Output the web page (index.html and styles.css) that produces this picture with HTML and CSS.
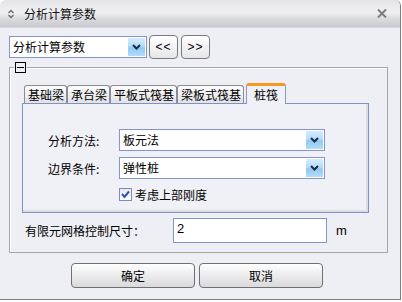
FILE: index.html
```html
<!DOCTYPE html>
<html>
<head>
<meta charset="utf-8">
<link rel="stylesheet" href="styles.css">
</head>
<body>
<div class="win">
  <div class="titlebar">
    <svg class="ticon" width="8" height="10" viewBox="0 0 8 10"><path d="M1.5 4 L4 1.5 L6.5 4 M1.5 6 L4 8.5 L6.5 6" fill="none" stroke="#6a6a6a" stroke-width="1.3"/></svg>
    <span class="title">分析计算参数</span>
    <svg class="close" width="10" height="9" viewBox="0 0 10 9"><path d="M1 0.5 L9 8.5 M9 0.5 L1 8.5" stroke="#7c7c7c" stroke-width="2"/></svg>
  </div>
  <div class="content">
    <div class="toprow">
      <div class="combo main"><span class="val">分析计算参数</span><span class="drop"><svg width="9" height="6" viewBox="0 0 9 6"><path d="M1 1 L4.5 4.5 L8 1" fill="none" stroke="#1e2c44" stroke-width="2"/></svg></span></div>
      <button class="nav">&lt;&lt;</button>
      <button class="nav">&gt;&gt;</button>
    </div>
    <div class="group">
      <span class="collapse"><span class="minus"></span></span>
      <div class="tabs">
        <span class="tab">基础梁</span>
        <span class="tab">承台梁</span>
        <span class="tab">平板式筏基</span>
        <span class="tab">梁板式筏基</span>
        <span class="tab active">桩筏</span>
      </div>
      <div class="panel">
        <div class="frow"><span class="lbl">分析方法:</span><div class="combo wide"><span class="val">板元法</span><span class="drop"><svg width="9" height="6" viewBox="0 0 9 6"><path d="M1 1 L4.5 4.5 L8 1" fill="none" stroke="#1e2c44" stroke-width="2"/></svg></span></div></div>
        <div class="frow"><span class="lbl">边界条件:</span><div class="combo wide"><span class="val">弹性桩</span><span class="drop"><svg width="9" height="6" viewBox="0 0 9 6"><path d="M1 1 L4.5 4.5 L8 1" fill="none" stroke="#1e2c44" stroke-width="2"/></svg></span></div></div>
        <div class="check"><span class="box"><svg width="11" height="11" viewBox="0 0 11 11"><path d="M2 5 L4.5 8 L9 2.5" fill="none" stroke="#3552b0" stroke-width="2"/></svg></span><span>考虑上部刚度</span></div>
      </div>
      <div class="meshrow"><span class="mlbl">有限元网格控制尺寸：</span><div class="input">2</div><span class="unit">m</span></div>
    </div>
    <div class="btns"><button class="btn">确定</button><button class="btn">取消</button></div>
  </div>
</div>
</body>
</html>
```

FILE: styles.css
```css
html, body {
  margin: 0;
  padding: 0;
  background: #ffffff;
}
body {
  font-family: "Noto Sans CJK SC", "Liberation Sans", sans-serif;
  font-size: 12px;
  color: #000;
}
.win {
  width: 400px;
  height: 299px;
  border-right: 1px solid #7e7e80;
  border-bottom: 1px solid #7e7e80;
  background: #eeeff4;
  border-top-left-radius: 6px;
  border-top-right-radius: 6px;
  overflow: hidden;
}
.titlebar {
  height: 28px;
  display: flex;
  align-items: center;
  background: linear-gradient(#e4e4e6 0%, #f0f0f2 45%, #dadbde 70%, #c9cacf 100%);
  border-bottom: 1px solid #d8d9de;
  box-sizing: border-box;
}
.ticon {
  margin-left: 7px;
  margin-right: 9px;
}
.title {
  flex: 1;
  line-height: 14px;
  font-size: 12px;
  color: #111;
}
.close {
  margin-right: 13px;
}
.content {
  padding: 7px 0 0 9px;
}
.toprow {
  display: flex;
  align-items: center;
  height: 24px;
}
.combo {
  box-sizing: border-box;
  height: 22px;
  border: 1px solid #8495cc;
  background: #fff;
  display: flex;
  align-items: stretch;
}
.combo.main {
  width: 138px;
}
.combo.wide {
  width: 206px;
}
.combo .val {
  flex: 1;
  padding-left: 3px;
  line-height: 20px;
}
.drop {
  width: 17px;
  margin: 1px;
  background: linear-gradient(#d6edfd 0%, #b4dcfa 45%, #8fcaf5 55%, #b2dcf9 100%);
  display: flex;
  align-items: center;
  justify-content: center;
}
.nav {
  box-sizing: border-box;
  width: 29px;
  height: 24px;
  margin-left: 3px;
  padding: 0;
  border: 1px solid #7b7b7b;
  border-radius: 4px;
  background: linear-gradient(#ffffff, #e6e6e8);
  font-family: "Liberation Sans", sans-serif;
  font-size: 12px;
  letter-spacing: 1px;
  color: #000;
}
.nav:first-of-type {
  margin-left: 2px;
}
.group {
  position: relative;
  box-sizing: border-box;
  width: 379px;
  margin-top: 8px;
  border: 1px solid #a5a5a5;
  box-shadow: inset 1px 1px 0 #ffffff;
  padding: 15px 0 9px 12px;
}
.collapse {
  position: absolute;
  left: 5px;
  top: -6px;
  width: 9px;
  height: 9px;
  border: 1px solid #000;
  background: #eeeff4;
  box-shadow: 0 0 0 1px #eeeff4;
  display: flex;
  align-items: center;
  justify-content: center;
}
.minus {
  width: 7px;
  height: 1px;
  background: #000;
}
.tabs {
  display: flex;
  align-items: flex-end;
  padding-left: 2px;
  height: 20px;
}
.tab {
  box-sizing: border-box;
  height: 18px;
  padding: 0 2px 0 3px;
  border: 1px solid #8c8c94;
  border-bottom: none;
  border-radius: 3px 3px 0 0;
  background: linear-gradient(#fdfdfd, #e2e2e6);
  line-height: 17px;
  white-space: nowrap;
}
.tab.active {
  position: relative;
  z-index: 1;
  height: 21px;
  margin-bottom: -1px;
  margin-left: 2px;
  padding: 0 7px;
  border-color: #8c98c4;
  border-top: 3px solid #f89a20;
  background: #f0f1f6;
  line-height: 18px;
}
.panel {
  box-sizing: border-box;
  width: 347px;
  height: 110px;
  border: 1px solid #8091c8;
  box-shadow: inset -2px -2px 0 #dcdde4;
  background: #f0f1f6;
  padding: 25px 0 0 25px;
  display: flex;
  flex-direction: column;
  gap: 6px;
}
.frow {
  display: flex;
  align-items: center;
}
.lbl {
  width: 71px;
}
.check {
  display: flex;
  align-items: center;
  margin-left: 71px;
  margin-top: 3px;
  height: 13px;
}
.box {
  box-sizing: border-box;
  width: 13px;
  height: 13px;
  border: 1px solid #7d8cb8;
  background: linear-gradient(#e8e9ee, #ffffff);
  display: flex;
  align-items: center;
  justify-content: center;
  margin-right: 3px;
}
.meshrow {
  display: flex;
  align-items: center;
  margin-top: 5px;
  padding-left: 3px;
}
.mlbl {
  width: 148px;
}
.input {
  box-sizing: border-box;
  width: 154px;
  height: 25px;
  border: 1px solid #8495cc;
  background: #fff;
  padding: 2px 0 0 3px;
  line-height: 16px;
  font-family: "Liberation Sans", sans-serif;
  font-size: 13px;
}
.unit {
  margin-left: 9px;
  font-family: "Liberation Sans", sans-serif;
  font-size: 13px;
}
.btns {
  display: flex;
  gap: 4px;
  margin-top: 10px;
  padding-left: 62px;
}
.btn {
  box-sizing: border-box;
  width: 124px;
  height: 25px;
  padding: 0;
  border: 1px solid #707070;
  border-radius: 4px;
  background: linear-gradient(#ffffff, #e8e8ea 60%, #dadadc);
  font-family: "Noto Sans CJK SC", sans-serif;
  font-size: 12px;
  color: #000;
}
```
